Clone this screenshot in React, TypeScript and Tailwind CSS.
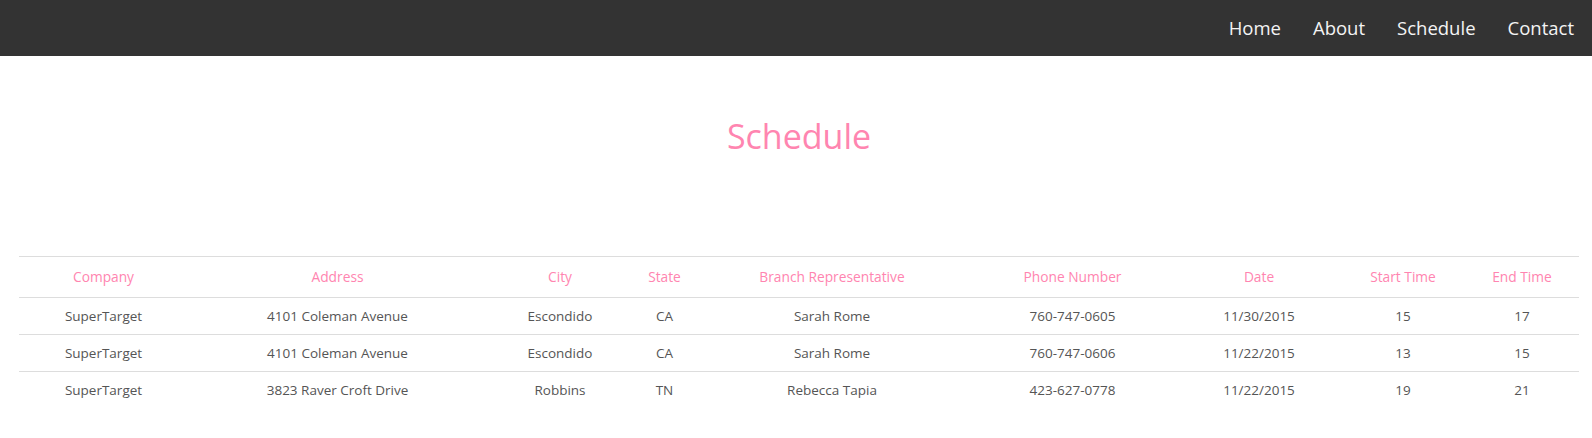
const rows = [
  ['SuperTarget', '4101 Coleman Avenue', 'Escondido', 'CA', 'Sarah Rome', '760-747-0605', '11/30/2015', '15', '17'],
  ['SuperTarget', '4101 Coleman Avenue', 'Escondido', 'CA', 'Sarah Rome', '760-747-0606', '11/22/2015', '13', '15'],
  ['SuperTarget', '3823 Raver Croft Drive', 'Robbins', 'TN', 'Rebecca Tapia', '423-627-0778', '11/22/2015', '19', '21'],
];

const headers = ['Company', 'Address', 'City', 'State', 'Branch Representative', 'Phone Number', 'Date', 'Start Time', 'End Time'];

const cols = ['w-[169px]', 'w-[299px]', 'w-[146px]', 'w-[63px]', 'w-[272px]', 'w-[209px]', 'w-[164px]', 'w-[124px]', 'w-[114px]'];

export default function App() {
  return (
    <div className="min-h-[438px] bg-white font-['Open_Sans',sans-serif]">
      <nav className="h-[56px] bg-[#333333] flex items-center justify-end pr-[18px] gap-[32px]">
        {['Home', 'About', 'Schedule', 'Contact'].map((l) => (
          <a key={l} href="#" className="text-[18.5px] text-[#f4f4f4]">
            {l}
          </a>
        ))}
      </nav>

      <h1 className="mt-[57px] pl-[6px] text-center text-[34px] leading-[46px] text-[#ff85b0]">Schedule</h1>

      <table className="mt-[97px] ml-[19px] w-[1560px] table-fixed border-collapse text-center">
        <colgroup>
          {cols.map((c, i) => (
            <col key={i} className={c} />
          ))}
        </colgroup>
        <thead>
          <tr className="h-[41px] border-t border-b border-[#dddddd]">
            {headers.map((h) => (
              <th key={h} className="p-0 font-normal text-[13.75px] text-[#ff85b0]">
                {h}
              </th>
            ))}
          </tr>
        </thead>
        <tbody>
          {rows.map((r, i) => (
            <tr key={i} className={i < rows.length - 1 ? 'h-[37px] border-b border-[#dddddd]' : 'h-[37px]'}>
              {r.map((c, j) => (
                <td key={j} className="p-0 text-[13.5px] text-[#555555]">
                  {c}
                </td>
              ))}
            </tr>
          ))}
        </tbody>
      </table>
    </div>
  );
}
